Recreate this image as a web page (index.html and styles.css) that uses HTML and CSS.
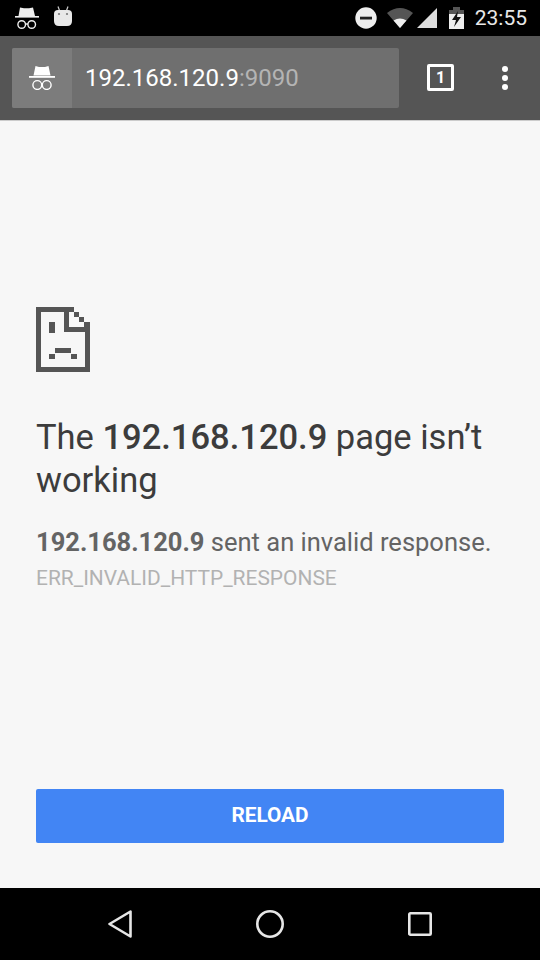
FILE: index.html
```html
<!DOCTYPE html>
<html lang="en">
<head>
    <meta charset="UTF-8">
    <title>192.168.120.9</title>
    <link rel="stylesheet" href="styles.css">
</head>
<body>
    <div class="status">
        <div class="status-left">
            <svg class="hat-small" width="24" height="22" viewBox="0 0 24 22"><g fill="#eee"><path d="M5 0.500L9 1.300H14L18 0.500L20 9H3.500z"/><rect x="0" y="9" width="24" height="1.600"/></g><g fill="none" stroke="#eee" stroke-width="1.400"><circle cx="6.700" cy="17.500" r="3.800"/><circle cx="16.700" cy="17.500" r="3.800"/><path d="M10.500 17h2.500"/></g></svg>
            <svg width="18" height="21" viewBox="0 0 18 21"><path d="M4 0.500l1.500 4M14 0.500l-1.500 4" stroke="#ccc" stroke-width="1.200"/><path d="M0 8Q0 4 4 4H14Q18 4 18 8V15Q18 20 13 20H5Q0 20 0 15z" fill="#e8e8e8"/><circle cx="5" cy="8" r="1.100" fill="#777"/><circle cx="13" cy="8" r="1.100" fill="#777"/></svg>
        </div>
        <div class="status-right">
            <svg class="ic-minus" width="22" height="22" viewBox="0 0 22 22"><circle cx="11" cy="11" r="10.700" fill="#eee"/><rect x="5" y="9.700" width="12" height="2.800" fill="#222"/></svg>
            <svg class="ic-wifi" width="26" height="20" viewBox="0 0 26 20"><path d="M0 5Q13 -5 26 5L13 20z" fill="#555"/><path d="M6.500 12.500Q13 8.500 19.500 12.500L13 20z" fill="#eee"/></svg>
            <svg class="ic-signal" width="20" height="20" viewBox="0 0 20 20"><path d="M20 0V20H0z" fill="#ddd"/></svg>
            <svg class="ic-battery" width="15" height="22" viewBox="0 0 15 22"><path d="M0 3h4V0h7v3h4v5H0z" fill="#555"/><path d="M0 7h15v15H0z" fill="#eee"/><path d="M9 4L3 13h4l-2 7 7-10H8z" fill="#111"/></svg>
            <span class="clock">23:55</span>
        </div>
    </div>

    <div class="toolbar">
        <div class="omnibox">
            <div class="incognito">
                <svg width="26" height="24" viewBox="0 0 26 24"><g fill="#fff"><path d="M6.500 0L10 1H16L19.500 0L21.500 9.500H4.500z"/><rect x="0" y="10" width="26" height="1.800"/></g><g fill="none" stroke="#fff" stroke-width="1.400"><circle cx="8.300" cy="19" r="4.400"/><circle cx="17.700" cy="19" r="4.400"/><path d="M12.500 18.500h1"/></g></svg>
            </div>
            <div class="url">192.168.120.9<span class="port">:9090</span></div>
        </div>
        <div class="tabs">1</div>
        <div class="menu"><i></i><i></i><i></i></div>
    </div>

    <main class="page">
        <svg class="sad" width="54" height="65" viewBox="0 0 54 65">
            <path fill="#555" fill-rule="evenodd" d="M0 0H38V5H43V10H48V15H54V65H0zM5 5V60H49V25H28V5zM33 5V20H48V15H43V10H38V5z"/>
            <rect x="13" y="15" width="6" height="11" fill="#555"/>
            <path fill="#555" d="M19 41H35V47H41V52H35V46H19V52H13V47H19z"/>
        </svg>
        <h1>The <b>192.168.120.9</b> page isn’t working</h1>
        <p class="msg"><b>192.168.120.9</b> sent an invalid response.</p>
        <p class="code">ERR_INVALID_HTTP_RESPONSE</p>
        <button class="reload">RELOAD</button>
    </main>

    <div class="nav">
        <span class="nav-btn"><svg width="24" height="28" viewBox="0 0 24 28"><path d="M22.500 1.500V26.500L1.500 14z" fill="none" stroke="#e6e6e6" stroke-width="2.600" stroke-linejoin="round"/></svg></span>
        <span class="nav-btn"><svg width="28" height="28" viewBox="0 0 28 28"><circle cx="14" cy="14" r="12.700" fill="none" stroke="#e6e6e6" stroke-width="2.600"/></svg></span>
        <span class="nav-btn"><svg width="24" height="24" viewBox="0 0 24 24"><rect x="1.300" y="1.300" width="21.400" height="21.400" rx="1" fill="none" stroke="#e6e6e6" stroke-width="2.600"/></svg></span>
    </div>
</body>
</html>
```

FILE: styles.css
```css
*{
    box-sizing: border-box;
}

html, body{
    margin: 0;
    padding: 0;
}

body{
    width: 540px;
    height: 960px;
    display: flex;
    flex-direction: column;
    font-family: Roboto, "Liberation Sans", sans-serif;
    background: #f7f7f7;
    overflow: hidden;
}

.status{
    height: 36px;
    background: #000;
    display: flex;
    justify-content: space-between;
    align-items: center;
    padding: 0 13px 0 15px;
    flex: none;
}

.status-left{
    display: flex;
    align-items: flex-start;
    gap: 15px;
    height: 36px;
    padding-top: 6px;
}

.hat-small{
    margin-top: 1px;
}

.status-right{
    display: flex;
    align-items: center;
}

.ic-wifi{
    margin-left: 10px;
}

.ic-signal{
    margin-left: 4px;
}

.ic-battery{
    margin-left: 12px;
}

.clock{
    color: #e8e8e8;
    font-size: 21px;
    margin-left: 11px;
}

.toolbar{
    height: 85px;
    background: #555;
    display: flex;
    align-items: center;
    padding: 0 0 0 12px;
    border-bottom: 1px solid #ccc;
    flex: none;
}

.omnibox{
    width: 387px;
    height: 60px;
    margin-top: -1px;
    background: #6f6f6f;
    border-radius: 2px;
    display: flex;
    align-items: center;
    overflow: hidden;
}

.incognito{
    width: 60px;
    height: 60px;
    background: #7c7c7c;
    display: flex;
    align-items: center;
    justify-content: center;
    flex: none;
}

.url{
    color: #fff;
    font-size: 24px;
    padding-left: 13px;
}

.port{
    color: #b4b4b4;
}

.tabs{
    width: 27px;
    height: 27px;
    margin-left: 28px;
    margin-top: -1px;
    border: 3px solid #fff;
    border-radius: 2px;
    color: #fff;
    font-size: 16px;
    font-weight: 700;
    display: flex;
    align-items: center;
    justify-content: center;
}

.menu{
    display: flex;
    flex-direction: column;
    gap: 3px;
    margin-left: 48px;
    margin-top: -1px;
}

.menu i{
    width: 6px;
    height: 6px;
    background: #fff;
    border-radius: 50%;
}

.page{
    flex: 1;
    padding: 186px 36px 45px;
    display: flex;
    flex-direction: column;
    align-items: flex-start;
}

.sad{
    flex: none;
}

h1{
    font-size: 34.500px;
    font-weight: 400;
    line-height: 43px;
    color: #3c3c3c;
    margin: 44px 0 0;
}

h1 b{
    font-weight: 500;
}

.msg{
    font-size: 25.500px;
    line-height: 32px;
    color: #646464;
    margin: 24px 0 0;
}

.msg b{
    font-weight: 700;
}

.code{
    font-size: 20.950px;
    line-height: 26px;
    color: #b2b2b2;
    margin: 7px 0 0;
}

.reload{
    width: 468px;
    height: 54px;
    margin-top: auto;
    padding: 0 0 2px;
    border: 0;
    border-radius: 2px;
    background: #4285f4;
    color: #fff;
    font: 700 20.800px Roboto, sans-serif;
}

.nav{
    height: 72px;
    background: #000;
    display: flex;
    align-items: center;
    justify-content: center;
    flex: none;
}

.nav-btn{
    width: 150px;
    display: flex;
    justify-content: center;
}
```
